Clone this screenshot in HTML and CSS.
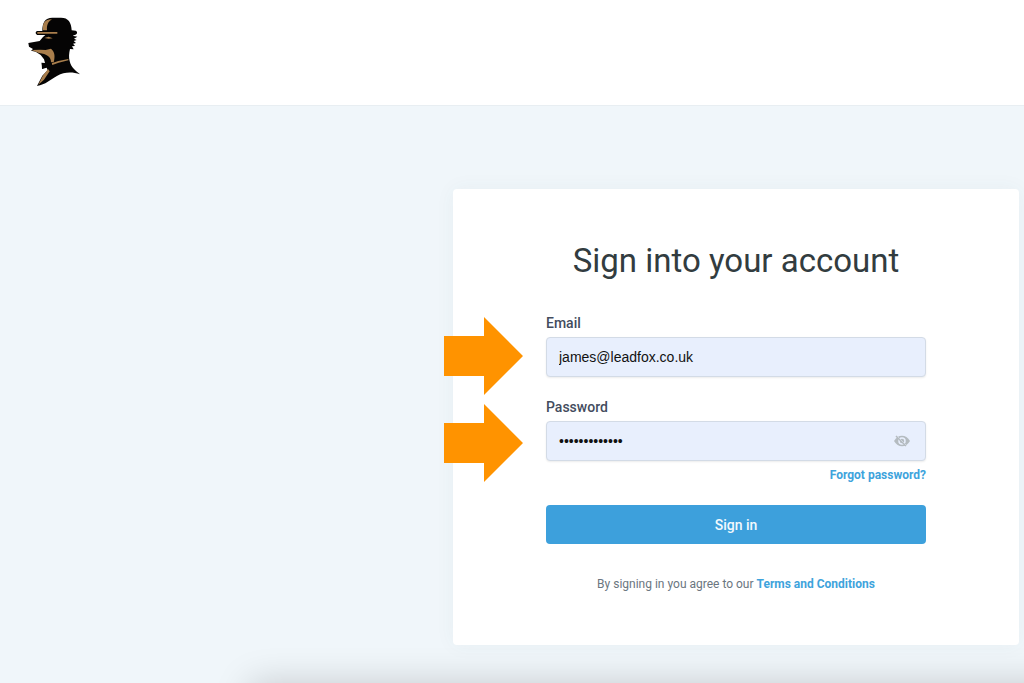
FILE: index.html
```html
<!DOCTYPE html>
<html lang="en">
<head>
  <meta charset="UTF-8" />
  <meta name="viewport" content="width=device-width, initial-scale=1.0"/>
  <title>Sign in</title>
  <link rel="stylesheet" href="styles.css">
</head>
<body>

  <header class="topbar">
    <a href="#" class="logo" aria-label="Home">
      <svg width="54" height="72" viewBox="39 33 162 216" aria-hidden="true">
        <path d="M82 78 C82 52 90 39 112 38 H138 C160 38 169 52 170 76 L182 77 C189 80 187 88 179 90 L173 92 L187 95 L177 101 L185 105 L176 108 L183 114 L174 116 L180 123 L171 124 L176 133 L165 132 C162 145 161 157 164 168 C168 187 181 196 195 208 C171 199 147 201 127 212 C106 224 92 238 66 243 L82 212 L98 196 L95 188 L81 192 L80 173 L90 174 L87 163 L77 150 L62 140 L48 137 L54 132 L42 125 L40 114 L74 108 L84 96 L91 90 H67 C61 87 60 80 67 78 Z" fill="#050404"/>
        <path d="M84 76 C82 55 88 44 111 43 C99 50 95 60 96 76 Z M67 81 H127 V86 H67 Z M88 99 L101 95 L113 100 L101 101 Z" fill="#a97e4c"/>
        <path d="M50 135 L76 134 L92 135 L108 131 C119 140 121 153 116 172 L108 172 C109 157 95 146 72 144 Z M110 175 L130 168 L160 162 V166 L131 173 L112 180 Z M99 192 L104 199 L87 224 L70 239 L83 213 Z" fill="#a97e4c"/>
        <path d="M80 173 L93 179 L104 170 L110 174 L109 191 L95 184 L82 192 Z" fill="#050404"/>
      </svg>
    </a>
  </header>

  <main class="page">
    <form class="card">
      <h1>Sign into your account</h1>

      <div class="field">
        <label for="email">Email</label>
        <input type="email" id="email" name="email" value="james@leadfox.co.uk" required />
      </div>

      <div class="field">
        <label for="password">Password</label>
        <div class="control">
          <input type="password" id="password" name="password" value="leadfox123456" required />
          <button type="button" class="toggle" aria-label="Show password">
            <svg width="16" height="12" viewBox="0 0 16 12" aria-hidden="true">
              <path d="M0 6 C4 -1 12 -1 16 6 C12 13 4 13 0 6Z" fill="#b4bbc0"/>
              <circle cx="8" cy="6" r="3" fill="none" stroke="#e8effd" stroke-width="1.5"/>
              <path d="M3 1 L13 11" stroke="#e8effd" stroke-width="1"/>
              <path d="M2 1 L12 11" stroke="#b4bbc0" stroke-width="1.5"/>
            </svg>
          </button>
        </div>
        <a href="#" class="forgot">Forgot password?</a>
      </div>

      <button type="submit" class="submit">Sign in</button>

      <p class="terms">By signing in you agree to our <a href="#">Terms and Conditions</a></p>

      <div class="arrows" aria-hidden="true">
        <svg width="79" height="78" viewBox="0 0 79 78"><path d="M0 19H40V0L79 39L40 78V59H0Z"/></svg>
        <svg width="79" height="78" viewBox="0 0 79 78"><path d="M0 19H40V0L79 39L40 78V59H0Z"/></svg>
      </div>
    </form>
  </main>

  <div class="bottom-shade"></div>

</body>
</html>
```
FILE: styles.css
```css
* {
  box-sizing: border-box;
}

body {
  margin: 0;
  min-height: 100vh;
  display: flex;
  flex-direction: column;
  position: relative;
  background-color: #f0f6fa;
  color: #323c40;
  font-family: Roboto, sans-serif;
}

.topbar {
  height: 106px;
  padding: 16px 28px;
  background-color: #fff;
  border-bottom: 1px solid #e8eef2;
}

.logo,
.logo svg {
  display: block;
}

.logo {
  width: 54px;
}

.page {
  display: flex;
  justify-content: flex-end;
  padding: 83px 5px 38px;
}

.card {
  position: relative;
  width: 100%;
  max-width: 566px;
  padding: 51px 93px 53px;
  border-radius: 4px;
  background-color: #fff;
  box-shadow: 0 0 20px rgba(60, 90, 100, 0.05);
}

h1 {
  margin: 0 0 33px;
  font-size: 33px;
  font-weight: 400;
  line-height: 42px;
  text-align: center;
}

.field {
  display: flex;
  flex-direction: column;
  margin-bottom: 22px;
}

label {
  margin-bottom: 6px;
  color: #434c5e;
  font-size: 14px;
  font-weight: 500;
  line-height: 16px;
}

.control {
  position: relative;
}

input {
  display: block;
  width: 100%;
  height: 40px;
  padding: 0 12px;
  border: 1px solid #d3dbe6;
  border-radius: 4px;
  background-color: #e8effd;
  box-shadow: 0 1px 2px rgba(0, 0, 0, 0.08);
  color: #111;
  font-family: "Liberation Sans", sans-serif;
  font-size: 14px;
}

.toggle {
  position: absolute;
  top: 0;
  right: 16px;
  height: 40px;
  padding: 0;
  border: none;
  background: none;
  cursor: pointer;
}

.toggle svg {
  display: block;
}

/* callouts pointing at the two fields */
.arrows {
  position: absolute;
  top: 128px;
  left: -9px;
  display: flex;
  flex-direction: column;
  gap: 9px;
  fill: #ff9300;
}

a {
  color: #3ea3dc;
  font-weight: 700;
  text-decoration: none;
}

.forgot {
  align-self: flex-end;
  margin-top: 6px;
  font-size: 12px;
  line-height: 16px;
}

.submit {
  display: block;
  width: 100%;
  height: 39px;
  border: none;
  border-radius: 4px;
  background-color: #3da0dc;
  color: #f2f9fd;
  font-family: inherit;
  font-size: 14px;
  font-weight: 500;
  cursor: pointer;
}

.terms {
  margin: 32px 0 0;
  color: #6b7680;
  font-size: 12px;
  line-height: 16px;
  text-align: center;
}

/* soft shadow rising from the bottom edge */
.bottom-shade {
  position: absolute;
  bottom: 0;
  left: 200px;
  right: 0;
  height: 38px;
  overflow: hidden;
  pointer-events: none;
}

.bottom-shade::before {
  content: "";
  position: absolute;
  top: 100%;
  left: 50px;
  right: -60px;
  height: 60px;
  box-shadow: 0 0 36px rgba(0, 0, 0, 0.18);
}
```
